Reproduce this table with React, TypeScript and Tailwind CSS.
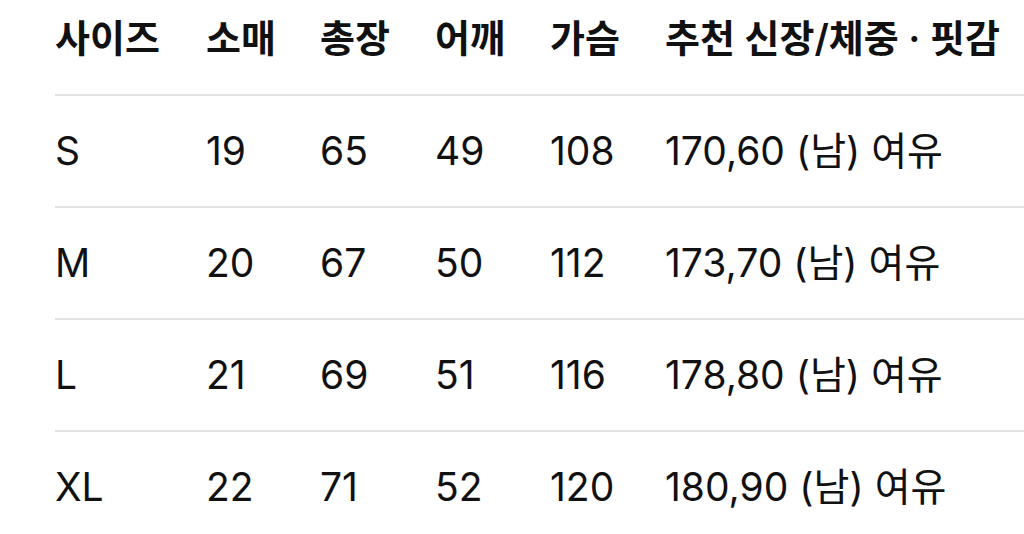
const HEADERS = ["사이즈", "소매", "총장", "어깨", "가슴", "추천 신장/체중 · 핏감"] as const;

const ROWS = [
  ["S", "19", "65", "49", "108", "170,60 (남) 여유"],
  ["M", "20", "67", "50", "112", "173,70 (남) 여유"],
  ["L", "21", "69", "51", "116", "178,80 (남) 여유"],
  ["XL", "22", "71", "52", "120", "180,90 (남) 여유"],
] as const;

const GRID = "grid grid-cols-[151px_114px_115px_115px_115px_1fr]";

export default function App() {
  return (
    <main
      className="h-[534px] overflow-hidden bg-white pl-[55px] text-[#111111]"
      style={{ fontFamily: 'Inter, "Noto Sans CJK KR", sans-serif' }}
    >
      <div className={`${GRID} h-[94px] items-center pb-[18px] text-[38px] font-semibold`}>
        {HEADERS.map((h) => (
          <div key={h} className="whitespace-nowrap">
            {h}
          </div>
        ))}
      </div>

      {ROWS.map((row) => (
        <div
          key={row[0]}
          className={`${GRID} h-[112px] items-center border-t-2 border-[#e4e4e4] text-[39px]`}
        >
          {row.map((cell, i) => (
            <div key={i} className="whitespace-nowrap">
              {cell}
            </div>
          ))}
        </div>
      ))}
    </main>
  );
}
